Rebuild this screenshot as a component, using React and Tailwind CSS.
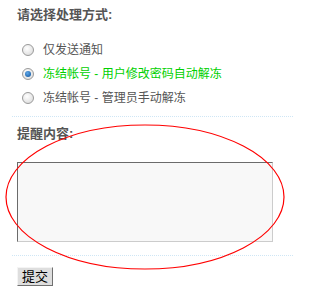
import { useState } from 'react'

const options = [
  { id: 'notify', label: '仅发送通知' },
  { id: 'auto', label: '冻结帐号 - 用户修改密码自动解冻' },
  { id: 'manual', label: '冻结帐号 - 管理员手动解冻' },
]

function Radio({ checked }) {
  return (
    <span className="w-[12px] h-[12px] rounded-full border border-[#9a9a9a] bg-[radial-gradient(circle_at_40%_35%,#ffffff,#d6d6d6)] flex items-center justify-center shrink-0">
      {checked && (
        <span className="w-[6px] h-[6px] rounded-full bg-[radial-gradient(circle_at_40%_35%,#5fa8e8,#0b4f9a)]" />
      )}
    </span>
  )
}

export default function App() {
  const [mode, setMode] = useState('auto')

  return (
    <div className="relative w-[293px] h-[298px] bg-white font-['Liberation_Sans','Noto_Sans_CJK_SC',sans-serif]">
      <div className="pl-[17px] pt-[7px]">
        <h3 className="text-[13px] leading-[16px] font-bold text-[#555]">请选择处理方式:</h3>
        <ul className="mt-[15px] pl-[5px]">
          {options.map(o => (
            <li
              key={o.id}
              onClick={() => setMode(o.id)}
              className={`flex items-center gap-[9px] h-[24px] text-[12px] cursor-pointer ${
                mode === o.id ? 'text-[#00d000]' : 'text-[#555]'
              }`}
            >
              <Radio checked={mode === o.id} />
              <span>{o.label}</span>
            </li>
          ))}
        </ul>
      </div>

      <div className="ml-[12px] mt-[6px] border-t border-dotted border-[#cfe6f5]" />

      <div className="pl-[17px]">
        <h3 className="mt-[9px] text-[13px] leading-[16px] font-bold text-[#555]">提醒内容:</h3>
        <textarea className="block mt-[20px] w-[256px] h-[80px] bg-[#f8f8f8] border border-t-[#6b6b6b] border-l-[#6b6b6b] border-r-[#cccccc] border-b-[#cccccc] resize-none outline-none" />
      </div>

      <div className="ml-[12px] mt-[13px] border-t border-dotted border-[#cfe6f5]" />

      <div className="pl-[17px] pt-[8px]">
        <button className="h-[19px] px-[4px] text-[13px] leading-[16px] text-black bg-[#dedede] border border-t-[#f4f4f4] border-l-[#f4f4f4] border-r-[#707070] border-b-[#707070] font-['SimSun','Noto_Sans_CJK_SC',sans-serif]">
          提交
        </button>
      </div>

      <svg className="absolute left-0 top-0 pointer-events-none" width="293" height="298">
        <ellipse cx="145" cy="197" rx="139" ry="72" fill="none" stroke="#ff0000" strokeWidth="1.2" />
      </svg>
    </div>
  )
}
